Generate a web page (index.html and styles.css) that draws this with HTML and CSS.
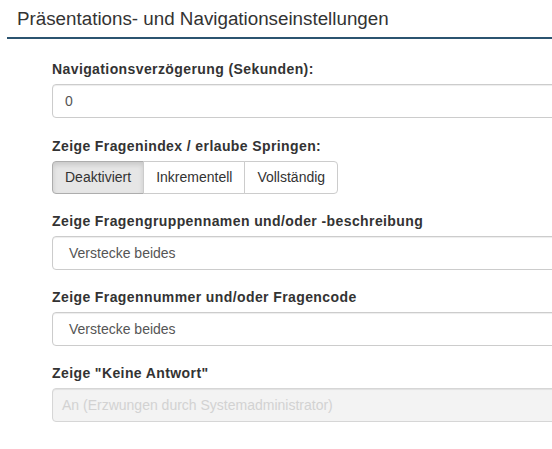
FILE: index.html
```html
<!DOCTYPE html>
<html lang="de">
<head>
<meta charset="utf-8">
<title>Präsentations- und Navigationseinstellungen</title>
<link rel="stylesheet" href="styles.css">
</head>
<body>
<div class="page">
  <div class="panel-header">
    <h3 class="panel-title">Präsentations- und Navigationseinstellungen</h3>
  </div>
  <form class="settings">
    <div class="form-group first">
      <label class="control-label">Navigationsverzögerung (Sekunden):</label>
      <div class="form-control">0</div>
    </div>
    <div class="form-group">
      <label class="control-label">Zeige Fragenindex / erlaube Springen:</label>
      <div class="btn-group">
        <span class="btn active">Deaktiviert</span>
        <span class="btn">Inkrementell</span>
        <span class="btn">Vollständig</span>
      </div>
    </div>
    <div class="form-group">
      <label class="control-label">Zeige Fragengruppennamen und/oder -beschreibung</label>
      <div class="form-control select">Verstecke beides</div>
    </div>
    <div class="form-group">
      <label class="control-label">Zeige Fragennummer und/oder Fragencode</label>
      <div class="form-control select">Verstecke beides</div>
    </div>
    <div class="form-group">
      <label class="control-label">Zeige "Keine Antwort"</label>
      <div class="form-control disabled">An (Erzwungen durch Systemadministrator)</div>
    </div>
  </form>
</div>
</body>
</html>
```

FILE: styles.css
```css
html, body {
  margin: 0;
  padding: 0;
  overflow: hidden;
  background: #fff;
}
body {
  font-family: "Liberation Sans", Arial, sans-serif;
  font-size: 14px;
  color: #333;
}
.page {
  width: 640px;
}
.panel-header {
  margin-left: 7px;
  padding: 7px 10px 7px;
  border-bottom: 2px solid #2b5470;
}
.panel-title {
  margin: 0;
  font-size: 18.8px;
  font-weight: normal;
  line-height: 23px;
  color: #333;
}
.settings {
  padding: 20px 0 0 52px;
}
.form-group {
  display: flex;
  flex-direction: column;
  align-items: flex-start;
  margin-bottom: 17px;
}
.form-group.first {
  margin-bottom: 18px;
}
.control-label {
  display: block;
  font-weight: bold;
  font-size: 14px;
  line-height: 20px;
  letter-spacing: 0.4px;
  margin-bottom: 5px;
  color: #333;
}
.form-control {
  box-sizing: border-box;
  width: 560px;
  height: 34px;
  padding: 0 12px;
  line-height: 32px;
  border: 1px solid #ccc;
  border-radius: 4px;
  color: #555;
  background: #fff;
  box-shadow: inset 0 1px 1px rgba(0,0,0,0.075);
}
.form-control.select {
  padding-left: 16px;
}
.form-control.disabled {
  padding-left: 9px;
  background: #f3f3f3;
  color: #d2d2d2;
  border-color: #d6d6d6;
}
.btn-group {
  display: flex;
}
.btn {
  box-sizing: border-box;
  height: 33px;
  line-height: 31px;
  padding: 0 12px;
  border: 1px solid #ccc;
  background: #fff;
  color: #333;
  margin-left: -1px;
}
.btn:first-child {
  margin-left: 0;
  border-radius: 4px 0 0 4px;
}
.btn:last-child {
  border-radius: 0 4px 4px 0;
}
.btn.active {
  background: #e6e6e6;
  border-color: #adadad;
  box-shadow: inset 0 3px 5px rgba(0,0,0,0.125);
}
```
